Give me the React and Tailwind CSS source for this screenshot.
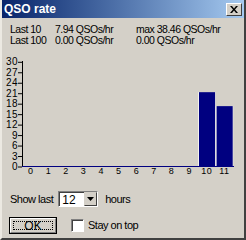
import React from 'react';

const rates = [0, 0, 0, 0, 0, 0, 0, 0, 0, 0, 21.3, 17.3];

// chart space: y of a value, measured inside the svg (svg starts at page y=52)
const yOf = (v) => 114.5 - v * 3.49;
const slot = 17.6;
const left = 22;

const RateChart = () => (
	<svg width="246" height="124" className="block">
		{[30, 27, 24, 21, 18, 15, 12, 9, 6, 3, 0].map((v) => (
			<g key={v}>
				<text x="18" y={yOf(v) + 3.5} textAnchor="end" fontSize="10" fontFamily="Liberation Sans, Arial, sans-serif" fill="#000" letterSpacing="0.5">
					{v}
				</text>
				<line x1="18" y1={yOf(v) + 0.5} x2="22" y2={yOf(v) + 0.5} stroke="#000" />
			</g>
		))}
		{rates.map((r, i) =>
			r > 0 ? (
				<g key={i}>
					<rect x={left + i * slot} y={yOf(r)} width={slot} height={114.5 - yOf(r)} fill="#f4f2ee" />
					<rect x={left + i * slot + 1} y={yOf(r)} width={slot - 1.5} height={114.5 - yOf(r)} fill="#000080" />
				</g>
			) : null
		)}
		<line x1="22.5" y1="9" x2="22.5" y2="115" stroke="#000" />
		<line x1="22" y1="114.5" x2="234" y2="114.5" stroke="#000080" />
		{rates.map((r, i) => (
			<text key={i} x={left + i * slot + slot / 2} y="122" textAnchor="middle" fontSize="9" fontFamily="Liberation Sans, Arial, sans-serif" fill="#000" letterSpacing="0.5">
				{i}
			</text>
		))}
	</svg>
);

export default function App() {
	return (
		<div className="w-[246px] h-[240px] bg-[#d4d0c8] font-['Liberation_Sans',Arial,sans-serif] text-[10px] tracking-[-0.3px] text-black flex flex-col border-r-2 border-r-[#404040] border-b-2 border-b-[#404040] border-l-2 border-l-[#ece9e2]">
			{/* title bar */}
			<div className="h-[18px] flex items-center justify-between pl-[2px] pr-[2px] bg-linear-to-r from-[#0a246a] to-[#a6caf0]">
				<span className="text-white font-bold text-[12px] tracking-normal leading-none">QSO rate</span>
				<div className="w-[16px] h-[13px] bg-[#d4d0c8] border border-t-white border-l-white border-r-[#404040] border-b-[#404040] flex items-center justify-center">
					<svg width="8" height="7" viewBox="0 0 8 7">
						<path d="M0 0h2l2 2.5L6 0h2L5 3.5 8 7H6L4 4.5 2 7H0l3-3.5z" fill="#000" />
					</svg>
				</div>
			</div>

			{/* stats */}
			<div className="mt-[6px] pl-[8px] grid grid-cols-[45px_81px_auto] leading-[11px] text-[10.5px] tracking-[-0.5px]">
				<span>Last 10</span>
				<span>7.94 QSOs/hr</span>
				<span>max 38.46 QSOs/hr</span>
				<span>Last 100</span>
				<span>0.00 QSOs/hr</span>
				<span>0.00 QSOs/hr</span>
			</div>

			<div className="mt-[6px] -ml-[2px]">
				<RateChart />
			</div>

			{/* show last */}
			<div className="mt-[15px] pl-[8px] flex items-center h-[16px] text-[11px] tracking-[-0.5px]">
				<span>Show last</span>
				<div className="ml-[5px] w-[40px] h-[16px] bg-white border border-t-[#808080] border-l-[#808080] border-r-white border-b-white flex">
					<div className="flex-1 border-t border-l border-t-[#404040] border-l-[#404040] pl-[2px] text-[12px] tracking-normal leading-[14px]">12</div>
					<div className="w-[13px] h-full bg-[#d4d0c8] border border-t-[#d4d0c8] border-l-[#d4d0c8] border-r-[#404040] border-b-[#404040] flex items-center justify-center">
						<svg width="7" height="4" viewBox="0 0 7 4">
							<path d="M0 0h7L3.5 4z" fill="#000" />
						</svg>
					</div>
				</div>
				<span className="ml-[7px]">hours</span>
			</div>

			{/* buttons */}
			<div className="mt-[10px] pl-[7px] flex items-center text-[11px] tracking-[-0.5px]">
				<button className="w-[48px] h-[17px] border border-black bg-[#d4d0c8] p-0 flex">
					<div className="flex-1 border border-t-white border-l-white border-r-[#808080] border-b-[#808080] p-[2px] flex">
						<div className="flex-1 border border-dotted border-black flex items-center justify-center text-[12px] tracking-normal leading-none">OK</div>
					</div>
				</button>
				<div className="ml-[14px] w-[13px] h-[13px] bg-white border border-t-[#808080] border-l-[#808080] border-r-white border-b-white">
					<div className="w-full h-full border-t border-l border-t-[#404040] border-l-[#404040]" />
				</div>
				<span className="ml-[4px]">Stay on top</span>
			</div>
		</div>
	);
}
